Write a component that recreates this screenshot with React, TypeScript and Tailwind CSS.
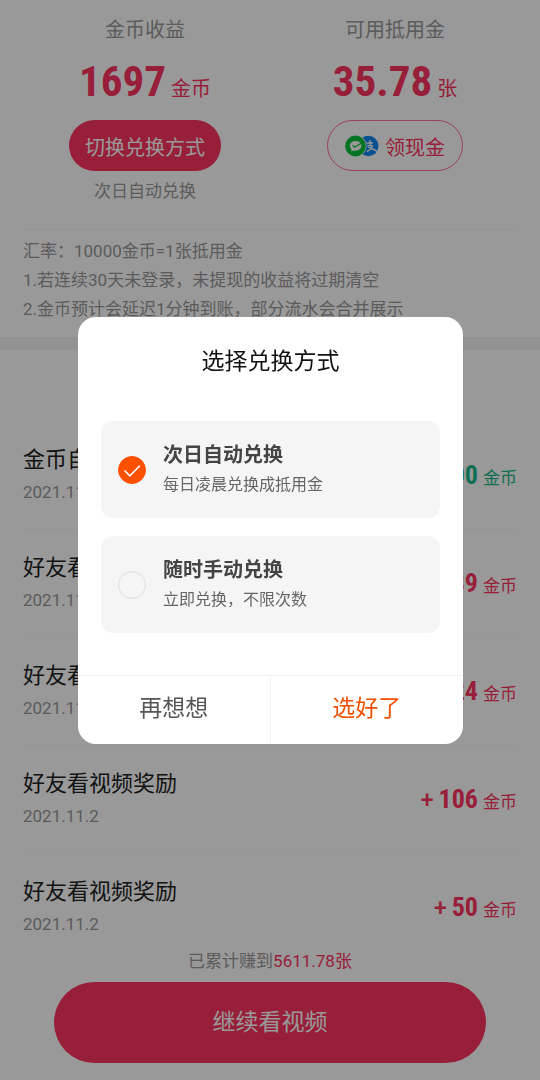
import React, { useState } from 'react'

interface CoinRecord {
  id: number
  title: string
  date: string
  sign: string
  amount: number
  type: 'income' | 'exchange'
}

const records: CoinRecord[] = [
  { id: 1, title: '金币自动兑换', date: '2021.11.3', sign: '-', amount: 10000, type: 'exchange' },
  { id: 2, title: '好友看视频奖励', date: '2021.11.2', sign: '+', amount: 89, type: 'income' },
  { id: 3, title: '好友看视频奖励', date: '2021.11.2', sign: '+', amount: 124, type: 'income' },
  { id: 4, title: '好友看视频奖励', date: '2021.11.2', sign: '+', amount: 106, type: 'income' },
  { id: 5, title: '好友看视频奖励', date: '2021.11.2', sign: '+', amount: 50, type: 'income' },
]

const options = [
  { value: 'auto', title: '次日自动兑换', desc: '每日凌晨兑换成抵用金' },
  { value: 'manual', title: '随时手动兑换', desc: '立即兑换，不限次数' },
]

// WeChat Pay circle overlapping the Alipay circle
const PayIcons: React.FC = () => (
  <svg className="w-[34px] h-[22px]" viewBox="0 0 34 22" fill="none" aria-hidden="true">
    <circle cx="23.3" cy="11" r="10.2" fill="#0d86f0" />
    <path
      d="M21.5 8h6.5M25 5v5.4M22.4 10.6h5c-.7 2.6-2.7 4.8-5.6 5.8M22.8 12.2c2.6.3 5.6 2 9.4 4.2"
      stroke="#fff"
      strokeWidth="1.3"
    />
    <circle cx="10.5" cy="11" r="11" fill="#fff" />
    <circle cx="10.5" cy="11" r="10.4" fill="#09c13e" />
    <ellipse cx="10.6" cy="10.8" rx="5.8" ry="4.9" fill="#fff" />
    <path d="M6.8 13.8l-.6 2.8 3-1.4z" fill="#fff" />
    <path d="M7.8 10.3l1.8 1.9 6.6-4" stroke="#09c13e" strokeWidth="1.3" />
  </svg>
)

const Stat: React.FC<{ label: string; value: string; unit: string; children: React.ReactNode }> = ({
  label,
  value,
  unit,
  children,
}) => (
  <div className="flex flex-col items-center">
    <div className="text-[20px] leading-7 text-[#999]">{label}</div>
    <div className="mt-[10px] flex h-[66px] items-baseline gap-[5px] text-[#fe3461]">
      <span className="font-['Roboto_Condensed','Open_Sans_Condensed','Noto_Sans_CJK_SC',sans-serif] text-[43px] leading-[54px] font-bold">
        {value}
      </span>
      <span className="text-[20px]">{unit}</span>
    </div>
    {children}
  </div>
)

const RecordRow: React.FC<{ record: CoinRecord }> = ({ record }) => (
  <li className="flex h-[108px] items-start justify-between border-b border-[#f8f8f8] pt-6">
    <div>
      <div className="text-[22px] leading-[30px] text-[#222]">{record.title}</div>
      <div className="mt-[5px] text-[17px] leading-6 text-[#999]">{record.date}</div>
    </div>
    <div
      className={`mt-[14px] flex items-baseline gap-[5px] ${
        record.type === 'income' ? 'text-[#fe3461]' : 'text-[#1bb98a]'
      }`}
    >
      <span className="text-[23px] leading-8 font-medium">{record.sign}</span>
      <span className="font-['Roboto_Condensed','Open_Sans_Condensed','Noto_Sans_CJK_SC',sans-serif] text-[26px] leading-8 font-bold">
        {record.amount}
      </span>
      <span className="text-[17px]">金币</span>
    </div>
  </li>
)

const ExchangeDialog: React.FC = () => {
  const [mode, setMode] = useState('auto')

  return (
    <div className="fixed inset-0 flex items-center bg-black/40 pr-[77px] pb-5 pl-[78px]">
      <div
        role="dialog"
        aria-modal="true"
        aria-labelledby="exchange-title"
        className="w-full overflow-hidden rounded-[18px] bg-white"
      >
        <h2 id="exchange-title" className="pt-[29px] text-center text-[23px] leading-8 text-[#111]">
          选择兑换方式
        </h2>
        <div className="mt-[43px] flex flex-col gap-[18px] px-[23px]">
          {options.map((o) => (
            <label
              key={o.value}
              className="flex items-center gap-[17px] rounded-xl bg-[#f5f5f5] px-[17px] pt-[19px] pb-[18px]"
            >
              <span className="relative flex size-7">
                <input
                  type="radio"
                  name="mode"
                  value={o.value}
                  checked={mode === o.value}
                  onChange={() => setMode(o.value)}
                  className="size-7 appearance-none rounded-full border border-[#ddd] checked:border-[#ff5000] checked:bg-[#ff5000]"
                />
                {mode === o.value && (
                  <svg className="pointer-events-none absolute inset-0 size-7" viewBox="0 0 28 28" fill="none">
                    <path d="M6.5 14.5l5.3 5.3 10-10" stroke="#fff" strokeWidth="1.6" />
                  </svg>
                )}
              </span>
              <span className="flex flex-col">
                <span className="text-[20px] leading-[30px] font-bold text-[#444]">{o.title}</span>
                <span className="text-[16px] leading-[30px] text-[#666]">{o.desc}</span>
              </span>
            </label>
          ))}
        </div>
        <div className="mt-[42px] grid grid-cols-2 border-t border-[#f2f2f2] text-[23px]">
          <button type="button" className="h-[68px] border-r border-[#f2f2f2] text-[#555]">
            再想想
          </button>
          <button type="button" className="h-[68px] text-[#f05000]">
            选好了
          </button>
        </div>
      </div>
    </div>
  )
}

const App: React.FC = () => {
  return (
    <div className="flex h-screen flex-col overflow-hidden bg-white font-[Roboto,'Noto_Sans_CJK_SC',sans-serif]">
      <main className="min-h-0 flex-1 overflow-hidden">
        <section className="grid grid-cols-2 px-5 pt-4">
          <Stat label="金币收益" value="1697" unit="金币">
            <button type="button" className="h-[51px] rounded-full bg-[#fe3461] px-4 pt-1 text-[20px] text-white">
              切换兑换方式
            </button>
            <div className="mt-2 text-[17px] leading-6 text-[#999]">次日自动兑换</div>
          </Stat>
          <Stat label="可用抵用金" value="35.78" unit="张">
            <button
              type="button"
              className="flex h-[51px] items-center gap-[6px] rounded-full border border-[#fe3461]/70 px-[17px] text-[20px] text-[#fe3461]"
            >
              <PayIcons />
              <span className="pt-1">领现金</span>
            </button>
          </Stat>
        </section>
        <section className="mx-[23px] mt-[26px] border-t border-[#f8f8f8] pt-[7px] pb-[13px] text-[17px] leading-[29px] text-[#999]">
          <p>汇率：10000金币=1张抵用金</p>
          <p>1.若连续30天未登录，未提现的收益将过期清空</p>
          <p>2.金币预计会延迟1分钟到账，部分流水会合并展示</p>
        </section>
        <div className="h-[13px] bg-[#f3f3f3]" />
        <ul className="mt-[71px] px-[23px]">
          {records.map((r) => (
            <RecordRow key={r.id} record={r} />
          ))}
        </ul>
      </main>
      <footer className="bg-white px-[10%] pt-3 pb-[17px]">
        <div className="text-center text-[17px] leading-6 text-[#999]">
          已累计赚到<span className="text-[#fe3461]">5611.78张</span>
        </div>
        <button type="button" className="mt-[9px] h-[81px] w-full rounded-full bg-[#fe3461] pt-[2px] text-[23px] text-white">
          继续看视频
        </button>
      </footer>
      <ExchangeDialog />
    </div>
  )
}

export default App
